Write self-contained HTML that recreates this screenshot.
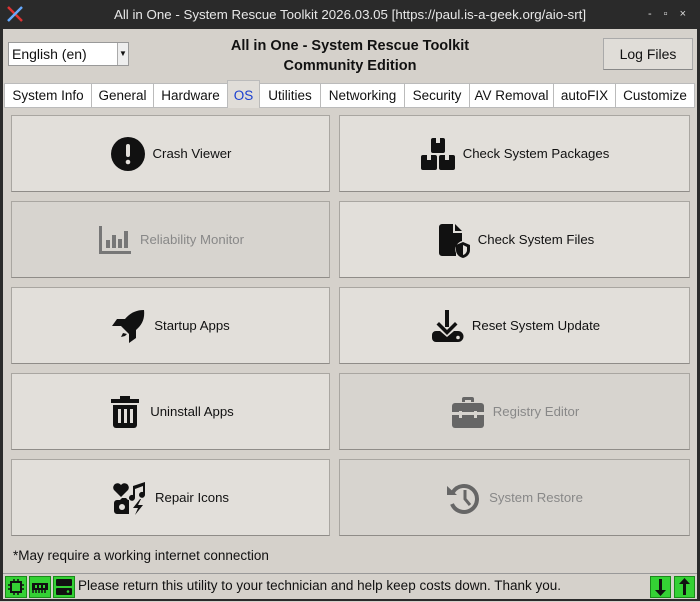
<!DOCTYPE html>
<html><head><meta charset="utf-8"><style>
*{box-sizing:border-box;margin:0;padding:0}
body{width:700px;height:601px;overflow:hidden;background:#d5d1cb;font-family:"Liberation Sans",sans-serif;position:relative;color:#111}
.a{position:absolute}
#title{left:0;top:0;width:700px;height:29px;background:#2a2a2a;color:#e8e8e8;font-size:13.3px;text-align:center;line-height:29px}
#frameL{left:0;top:29px;width:3px;height:572px;background:#2a2a2a}
#frameR{left:697px;top:29px;width:3px;height:572px;background:#2a2a2a}
#frameB{left:0;top:599px;width:700px;height:2px;background:#2a2a2a}
.combo{left:8px;top:42px;width:121px;height:24px;background:#fff;border:1px solid #999;font-size:14px;line-height:22px;padding-left:3px}
.combo .dd{position:absolute;right:0;top:0;width:11px;height:22px;border-left:1px solid #aaa;background:#eee;font-size:8px;text-align:center}
.hdr{left:180px;top:36px;width:340px;text-align:center;font-weight:bold;font-size:14.5px;line-height:20px}
.logbtn{left:603px;top:38px;width:90px;height:32px;background:#e0ddd8;border:1px solid #aaa;border-bottom-color:#888;font-size:14px;text-align:center;line-height:30px}
.tab{top:83px;height:25px;background:#fff;border:1px solid #bbb;font-size:13.5px;text-align:center;line-height:23px;color:#111}
.tab.on{top:80px;height:28px;background:#e0ddd8;color:#1a3fd0;border-bottom:none;line-height:29px}
.pane{left:4px;top:107px;width:691px;height:436px;border-top:1px solid #bbb}
.btn{width:319px;height:77px;background:#e2dfda;border:1px solid #a9a6a1;border-bottom-color:#8f8c88;display:flex;align-items:center;justify-content:center;font-size:13.2px;gap:7px}
.btn.r{width:351px}
.btn.dis{background:#d7d4cf;color:#888}
.btn svg{width:36px;height:36px}
.note{left:13px;top:548px;font-size:13.5px}
.status{left:3px;top:573px;width:694px;height:26px;border-top:1px solid #999;background:#d5d1cb}
.g{top:576px;width:22px;height:22px;background:#34d134;border:1px solid #1a8a1a}
.msg{left:78px;top:578px;font-size:13.5px}
</style></head><body>
<div class="a" id="title">All in One - System Rescue Toolkit 2026.03.05 [https://paul.is-a-geek.org/aio-srt]</div>
<svg class="a" style="left:6px;top:5px" width="18" height="18" viewBox="0 0 18 18"><path d="M2 2L16 16" stroke="#d33" stroke-width="2.5"/><path d="M16 2L2 16" stroke="#6af" stroke-width="2.5"/></svg>
<div class="a" style="left:648px;top:8px;color:#ddd;font-size:11px;letter-spacing:12px">-▫×</div>
<div class="a" id="frameL"></div><div class="a" id="frameR"></div>
<div class="a combo">English (en)<div class="dd">▼</div></div>
<div class="a hdr">All in One - System Rescue Toolkit<br>Community Edition</div>
<div class="a logbtn">Log Files</div>

<div class="a tab" style="left:4px;width:88px">System Info</div>
<div class="a tab" style="left:91px;width:63px">General</div>
<div class="a tab" style="left:153px;width:75px">Hardware</div>
<div class="a tab" style="left:259px;width:62px">Utilities</div>
<div class="a tab" style="left:320px;width:85px">Networking</div>
<div class="a tab" style="left:404px;width:66px">Security</div>
<div class="a tab" style="left:469px;width:85px">AV Removal</div>
<div class="a tab" style="left:553px;width:63px">autoFIX</div>
<div class="a tab" style="left:615px;width:80px">Customize</div>
<div class="a pane"></div>
<div class="a tab on" style="left:227px;width:33px">OS</div>

<div class="a btn" style="left:11px;top:115px"><svg viewBox="0 0 36 36"><circle cx="18" cy="18" r="17" fill="#111"/><rect x="16" y="8" width="4" height="13" rx="2" fill="#e2dfda"/><circle cx="18" cy="26" r="2.3" fill="#e2dfda"/></svg>Crash Viewer</div>
<div class="a btn r" style="left:339px;top:115px"><svg viewBox="0 0 36 36"><rect x="11" y="2" width="14" height="15" rx="2" fill="#111"/><rect x="1" y="19" width="16" height="15" rx="2" fill="#111"/><rect x="19" y="19" width="16" height="15" rx="2" fill="#111"/><rect x="16" y="2" width="4" height="5" fill="#e2dfda"/><rect x="7" y="19" width="4" height="5" fill="#e2dfda"/><rect x="25" y="19" width="4" height="5" fill="#e2dfda"/></svg>Check System Packages</div>

<div class="a btn dis" style="left:11px;top:201px"><svg viewBox="0 0 36 36" fill="#777"><rect x="2" y="4" width="3" height="28"/><rect x="2" y="29" width="32" height="3"/><rect x="9" y="18" width="4" height="8"/><rect x="15" y="13" width="4" height="13"/><rect x="21" y="17" width="4" height="9"/><rect x="27" y="9" width="4" height="17"/></svg>Reliability Monitor</div>
<div class="a btn r" style="left:339px;top:201px"><svg viewBox="0 0 36 36"><path d="M4 5a3 3 0 0 1 3-3h11v9h9v8a9 9 0 0 0-6 12v3H7a3 3 0 0 1-3-3z M20 2l7 7h-7z" fill="#111"/><path d="M28 20l7 3v5c0 4-3 7-7 8-4-1-7-4-7-8v-5z" fill="#111"/><path d="M28 23l4 2v3c0 2.5-2 4.5-4 5z" fill="#e2dfda"/></svg>Check System Files</div>

<div class="a btn" style="left:11px;top:287px"><svg viewBox="0 0 36 36" fill="#111"><path d="M33 2c-8 0-14 3-19 9H6l-5 7h9l8 8v9l7-5v-8c6-5 9-11 8-20z"/><path d="M12 25l-2 4 4-1 2-2z"/></svg>Startup Apps</div>
<div class="a btn r" style="left:339px;top:287px"><svg viewBox="0 0 36 36" fill="#111"><rect x="16" y="2" width="4" height="17"/><path d="M10 14l8 8 8-8 2.5 2.5L18 27 7.5 16.5z"/><path d="M3 27a4 4 0 0 1 4-4h4l7 6 7-6h4a4 4 0 0 1 0 11H7a4 4 0 0 1-4-4z"/><circle cx="29" cy="29.5" r="1.8" fill="#e2dfda"/></svg>Reset System Update</div>

<div class="a btn" style="left:11px;top:373px"><svg viewBox="0 0 36 36" fill="#111"><rect x="4" y="5" width="28" height="4"/><rect x="13" y="2" width="10" height="4"/><path d="M6 11h24v20a3 3 0 0 1-3 3H9a3 3 0 0 1-3-3z"/><rect x="11" y="15" width="3" height="14" fill="#e2dfda"/><rect x="17" y="15" width="3" height="14" fill="#e2dfda"/><rect x="23" y="15" width="3" height="14" fill="#e2dfda"/></svg>Uninstall Apps</div>
<div class="a btn r dis" style="left:339px;top:373px"><svg viewBox="0 0 36 36" fill="#666"><path d="M12 8V5a2 2 0 0 1 2-2h8a2 2 0 0 1 2 2v3h-3V6h-6v2z"/><path d="M2 12a3 3 0 0 1 3-3h26a3 3 0 0 1 3 3v6H2z"/><path d="M2 21h32v10a3 3 0 0 1-3 3H5a3 3 0 0 1-3-3z"/><rect x="9" y="17" width="3" height="7" fill="#d7d4cf"/><rect x="24" y="17" width="3" height="7" fill="#d7d4cf"/></svg>Registry Editor</div>

<div class="a btn" style="left:11px;top:459px"><svg viewBox="0 0 36 36" fill="#111"><path d="M9 17L2 10a4 4 0 0 1 7-5 4 4 0 0 1 7 5z"/><path d="M21 6l12-4v13a3 3 0 1 1-2-3V6l-8 3v9a3 3 0 1 1-2-3z"/><path d="M2 23a3 3 0 0 1 3-3h3l2-2h4l2 2h1v14H5a3 3 0 0 1-3-3z"/><circle cx="10" cy="27" r="3" fill="#e2dfda"/><path d="M28 19l-7 9h5l-3 7 8-10h-5l3-6z"/></svg>Repair Icons</div>
<div class="a btn r dis" style="left:339px;top:459px"><svg viewBox="0 0 36 36"><path d="M7 12A13 13 0 1 1 6 24" fill="none" stroke="#666" stroke-width="4"/><path d="M1 6l10 9H1z" fill="#666"/><path d="M19 10v9l5 6" fill="none" stroke="#666" stroke-width="3"/></svg>System Restore</div>

<div class="a note">*May require a working internet connection</div>
<div class="a status"></div>
<div class="a g" style="left:5px"><svg width="20" height="20" viewBox="0 0 20 20"><rect x="5" y="5" width="10" height="10" fill="none" stroke="#111" stroke-width="2"/><path d="M8 2v3M12 2v3M8 15v3M12 15v3M2 8h3M2 12h3M15 8h3M15 12h3" stroke="#111" stroke-width="1.5"/></svg></div>
<div class="a g" style="left:29px"><svg width="20" height="20" viewBox="0 0 20 20"><rect x="2" y="6" width="16" height="7" fill="#111"/><path d="M3 13v3M6 13v3M9 13v3M12 13v3M15 13v3" stroke="#111" stroke-width="1.5"/><rect x="5" y="8" width="2" height="3" fill="#34d134"/><rect x="9" y="8" width="2" height="3" fill="#34d134"/><rect x="13" y="8" width="2" height="3" fill="#34d134"/></svg></div>
<div class="a g" style="left:53px"><svg width="20" height="20" viewBox="0 0 20 20"><rect x="2" y="2" width="16" height="7" rx="1" fill="#111"/><rect x="2" y="11" width="16" height="7" rx="1" fill="#111"/><circle cx="14" cy="14.5" r="1.3" fill="#34d134"/></svg></div>
<div class="a msg">Please return this utility to your technician and help keep costs down. Thank you.</div>
<div class="a g" style="left:650px;width:21px"><svg width="19" height="20" viewBox="0 0 19 20"><path d="M8 2h3v11h4l-5.5 6L4 13h4z" fill="#111"/></svg></div>
<div class="a g" style="left:674px;width:21px"><svg width="19" height="20" viewBox="0 0 19 20"><path d="M8 18h3V7h4L9.5 1 4 7h4z" fill="#111"/></svg></div>
<div class="a" id="frameB"></div>
</body></html>
